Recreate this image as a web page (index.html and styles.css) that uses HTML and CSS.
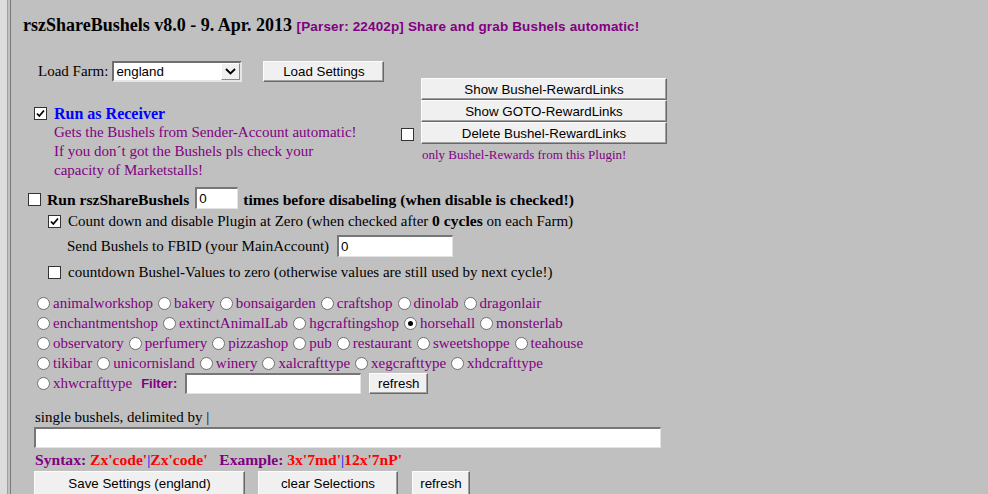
FILE: index.html
```html
<!DOCTYPE html>
<html>
<head>
<meta charset="utf-8">
<link rel="stylesheet" href="styles.css">
</head>
<body>
<div class="frame">
<div class="panel">
  <div class="title">rszShareBushels v8.0 - 9. Apr. 2013 <span class="title-sub">[Parser: 22402p] Share and grab Bushels automatic!</span></div>

  <div class="top">
    <div class="left">
      <div class="farm-row">
        <span class="farm-label">Load Farm:</span>
        <div class="select"><span class="select-text">england</span><span class="select-arrow"><svg width="11" height="7" viewBox="0 0 11 7"><path d="M1 1 L5.5 5.5 L10 1" fill="none" stroke="#000" stroke-width="1.8"/></svg></span></div>
        <button class="btn btn-load">Load Settings</button>
      </div>
      <div class="receiver">
        <span class="cb checked"><svg width="11" height="11" viewBox="0 0 11 11"><path d="M2 5.5 L4.3 8 L9 2.5" fill="none" stroke="#000" stroke-width="1.8"/></svg></span>
        <div class="receiver-text">
          <div class="receiver-title">Run as Receiver</div>
          <div class="receiver-desc">Gets the Bushels from Sender-Account automatic!<br>If you don´t got the Bushels pls check your<br>capacity of Marketstalls!</div>
        </div>
      </div>
    </div>
    <div class="right">
      <div class="right-row"><span class="cb-slot"></span><button class="btn btn-wide">Show Bushel-RewardLinks</button></div>
      <div class="right-row"><span class="cb-slot"></span><button class="btn btn-wide">Show GOTO-RewardLinks</button></div>
      <div class="right-row"><span class="cb-slot"><span class="cb cb-right"></span></span><button class="btn btn-wide">Delete Bushel-RewardLinks</button></div>
      <div class="note">only Bushel-Rewards from this Plugin!</div>
    </div>
  </div>

  <div class="run-row">
    <span class="cb"></span>
    <span class="bold run-label">Run rszShareBushels</span>
    <input class="txt txt-times" type="text" value="0">
    <span class="bold times-label">times before disabeling (when disable is checked!)</span>
  </div>
  <div class="count-row">
    <span class="cb checked"><svg width="11" height="11" viewBox="0 0 11 11"><path d="M2 5.5 L4.3 8 L9 2.5" fill="none" stroke="#000" stroke-width="1.8"/></svg></span>
    <span class="opt-label">Count down and disable Plugin at Zero (when checked after <b class="bold">0 cycles</b> on each Farm)</span>
  </div>
  <div class="fbid-row">
    <span>Send Bushels to FBID (your MainAccount)</span>
    <input class="txt txt-fbid" type="text" value="0">
  </div>
  <div class="cd-row">
    <span class="cb"></span>
    <span class="opt-label">countdown Bushel-Values to zero (otherwise values are still used by next cycle!)</span>
  </div>

  <div class="radios">
    <div class="rrow">
      <span class="ritem"><span class="radio"></span>animalworkshop</span>
      <span class="ritem"><span class="radio"></span>bakery</span>
      <span class="ritem"><span class="radio"></span>bonsaigarden</span>
      <span class="ritem"><span class="radio"></span>craftshop</span>
      <span class="ritem"><span class="radio"></span>dinolab</span>
      <span class="ritem"><span class="radio"></span>dragonlair</span>
    </div>
    <div class="rrow">
      <span class="ritem"><span class="radio"></span>enchantmentshop</span>
      <span class="ritem"><span class="radio"></span>extinctAnimalLab</span>
      <span class="ritem"><span class="radio"></span>hgcraftingshop</span>
      <span class="ritem"><span class="radio on"></span>horsehall</span>
      <span class="ritem"><span class="radio"></span>monsterlab</span>
    </div>
    <div class="rrow">
      <span class="ritem"><span class="radio"></span>observatory</span>
      <span class="ritem"><span class="radio"></span>perfumery</span>
      <span class="ritem"><span class="radio"></span>pizzashop</span>
      <span class="ritem"><span class="radio"></span>pub</span>
      <span class="ritem"><span class="radio"></span>restaurant</span>
      <span class="ritem"><span class="radio"></span>sweetshoppe</span>
      <span class="ritem"><span class="radio"></span>teahouse</span>
    </div>
    <div class="rrow">
      <span class="ritem"><span class="radio"></span>tikibar</span>
      <span class="ritem"><span class="radio"></span>unicornisland</span>
      <span class="ritem"><span class="radio"></span>winery</span>
      <span class="ritem"><span class="radio"></span>xalcrafttype</span>
      <span class="ritem"><span class="radio"></span>xegcrafttype</span>
      <span class="ritem"><span class="radio"></span>xhdcrafttype</span>
    </div>
    <div class="rrow">
      <span class="ritem"><span class="radio"></span>xhwcrafttype</span>
      <span class="filter-label">Filter:</span>
      <input class="txt txt-filter" type="text" value="">
      <button class="btn btn-refresh-small">refresh</button>
    </div>
  </div>

  <div class="single-label">single bushels, delimited by |</div>
  <input class="txt txt-single" type="text" value="">
  <div class="syntax"><span class="purple">Syntax: </span><span class="red">Zx'code'</span><span class="blue">|</span><span class="red">Zx'code'</span>&nbsp;&nbsp; <span class="purple">Example: </span><span class="red">3x'7md'</span><span class="blue">|</span><span class="red">12x'7nP'</span></div>

  <div class="bottom-buttons">
    <button class="btn btn-save">Save Settings (england)</button>
    <button class="btn btn-clear">clear Selections</button>
    <button class="btn btn-refresh">refresh</button>
  </div>
</div>
</div>
</body>
</html>
```
FILE: styles.css
```css
html, body {
  margin: 0;
  padding: 0;
}
body {
  background: #dcdcdc;
  font-family: "Liberation Serif", "Times New Roman", serif;
  font-size: 15px;
  color: #000;
  overflow: hidden;
}
.frame {
  margin-left: 7px;
  border-left: 1px solid #a0a0a0;
  background: #c0c0c0;
  height: 494px;
}
.panel {
  margin-left: 2px;
  border-left: 1px solid #7a7a7a;
  height: 494px;
  padding-top: 15px;
  box-sizing: border-box;
}
.title {
  font-weight: bold;
  font-size: 18px;
  line-height: 21px;
  height: 21px;
  margin-left: 12px;
  white-space: nowrap;
}
.title-sub {
  font-family: "Liberation Sans", Arial, sans-serif;
  font-size: 13.5px;
  letter-spacing: 0.15px;
  color: #800080;
}
.top {
  display: flex;
  margin-top: 25px;
}
.left {
  width: 390px;
}
.farm-row {
  display: flex;
  align-items: center;
  height: 21px;
  padding-left: 27px;
}
.farm-label {
  white-space: nowrap;
}
.select {
  margin-left: 4px;
  width: 130px;
  height: 21px;
  box-sizing: border-box;
  background: #fff;
  border-top: 2px solid #6e6e6e;
  border-left: 2px solid #6e6e6e;
  border-right: 2px solid #e6e6e6;
  border-bottom: 2px solid #e6e6e6;
  display: flex;
  align-items: center;
  justify-content: space-between;
  font-family: "Liberation Sans", Arial, sans-serif;
  font-size: 13.33px;
}
.select-text {
  padding-left: 2px;
}
.select-arrow {
  width: 19px;
  height: 17px;
  box-sizing: border-box;
  background: #f0f0f0;
  border: 1px solid #fff;
  border-right-color: #8a8a8a;
  border-bottom-color: #8a8a8a;
  display: flex;
  align-items: center;
  justify-content: center;
}
.btn {
  font-family: "Liberation Sans", Arial, sans-serif;
  font-size: 13.33px;
  color: #000;
  background: #f0f0f0;
  border-top: 1px solid #fcfcfc;
  border-left: 1px solid #fcfcfc;
  border-right: 1px solid #696969;
  border-bottom: 1px solid #696969;
  box-shadow: inset -1px -1px 0 #a0a0a0;
  box-sizing: border-box;
  padding: 0;
  margin: 0;
  text-align: center;
  display: block;
}
.btn-load {
  margin-left: 21px;
  width: 121px;
  height: 21px;
}
.receiver {
  display: flex;
  margin-top: 22px;
  padding-left: 23px;
}
.receiver .cb {
  margin-top: 3px;
}
.receiver-text {
  margin-left: 7px;
}
.receiver-title {
  font-weight: bold;
  font-size: 16px;
  line-height: 19px;
  color: #0000ff;
}
.receiver-desc {
  color: #800080;
  line-height: 19px;
}
.right {
  margin-top: 17px;
  display: flex;
  flex-direction: column;
}
.right-row {
  display: flex;
  align-items: flex-start;
  height: 22px;
}
.cb-slot {
  width: 20px;
  flex: none;
}
.btn-wide {
  width: 246px;
  height: 22px;
}
.cb-right {
  margin-top: 6px;
}
.note {
  font-size: 13px;
  line-height: 18px;
  margin-top: 2px;
  margin-left: 21px;
  color: #800080;
  white-space: nowrap;
}
.cb {
  display: inline-flex;
  align-items: center;
  justify-content: center;
  flex: none;
  width: 13px;
  height: 13px;
  box-sizing: border-box;
  border: 1px solid #333;
  background: #fff;
}
.bold {
  font-weight: bold;
  font-size: 15.6px;
}
.run-row {
  display: flex;
  align-items: flex-end;
  height: 22px;
  margin-top: 7px;
  padding-left: 17px;
  white-space: nowrap;
}
.run-row .cb {
  margin-bottom: 3px;
}
.run-row .bold {
  line-height: 19px;
}
.run-label {
  margin-left: 6px;
}
.txt {
  box-sizing: border-box;
  background: #fff;
  border-top: 2px solid #767676;
  border-left: 2px solid #767676;
  border-right: 1px solid #e3e3e3;
  border-bottom: 1px solid #e3e3e3;
  font-family: "Liberation Sans", Arial, sans-serif;
  font-size: 13.33px;
  padding: 0 2px;
  margin: 0;
  outline: none;
  color: #000;
}
.txt-times {
  margin-left: 6px;
  width: 43px;
  height: 22px;
}
.times-label {
  margin-left: 5px;
}
.count-row {
  display: flex;
  align-items: center;
  height: 20px;
  margin-top: 2px;
  padding-left: 37px;
  white-space: nowrap;
}
.opt-label {
  margin-left: 7px;
}
.fbid-row {
  display: flex;
  align-items: center;
  height: 22px;
  margin-top: 4px;
  padding-left: 56px;
  white-space: nowrap;
}
.txt-fbid {
  margin-left: 8px;
  width: 116px;
  height: 22px;
}
.cd-row {
  display: flex;
  align-items: center;
  height: 21px;
  margin-top: 5px;
  padding-left: 37px;
  white-space: nowrap;
}
.radios {
  margin-top: 10px;
  padding-left: 26px;
  color: #800080;
}
.rrow {
  display: flex;
  align-items: center;
  height: 20px;
  white-space: nowrap;
}
.ritem {
  display: flex;
  align-items: center;
}
.ritem + .ritem {
  margin-left: 5px;
}
.radio {
  display: inline-flex;
  align-items: center;
  justify-content: center;
  width: 13px;
  height: 13px;
  box-sizing: border-box;
  border-radius: 50%;
  border: 1px solid #6f6f6f;
  background: #fff;
  margin-right: 3px;
  flex: none;
}
.radio.on::after {
  content: "";
  width: 5px;
  height: 5px;
  border-radius: 50%;
  background: #000;
}
.filter-label {
  margin-left: 9px;
  font-family: "Liberation Sans", Arial, sans-serif;
  font-weight: bold;
  font-size: 13px;
  color: #800080;
}
.txt-filter {
  margin-left: 8px;
  width: 176px;
  height: 21px;
}
.btn-refresh-small {
  margin-left: 8px;
  width: 59px;
  height: 21px;
}
.single-label {
  margin-top: 15px;
  line-height: 19px;
  padding-left: 24px;
}
.txt-single {
  display: block;
  margin-left: 23px;
  width: 627px;
  height: 21px;
}
.syntax {
  margin-top: 3px;
  line-height: 18px;
  padding-left: 24px;
  font-weight: bold;
  font-size: 15.6px;
  white-space: nowrap;
}
.purple {
  color: #800080;
}
.red {
  color: #ff0000;
}
.blue {
  color: #0000ff;
  font-weight: normal;
}
.bottom-buttons {
  display: flex;
  margin-top: 2px;
  padding-left: 23px;
}
.btn-save {
  width: 211px;
  height: 25px;
}
.btn-clear {
  margin-left: 13px;
  width: 140px;
  height: 25px;
}
.btn-refresh {
  margin-left: 14px;
  width: 58px;
  height: 25px;
}
```
